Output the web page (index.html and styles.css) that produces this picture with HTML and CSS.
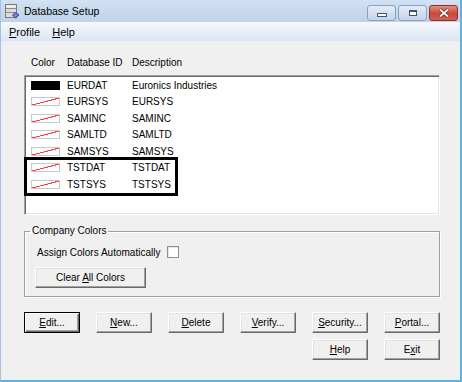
FILE: index.html
```html
<!DOCTYPE html>
<html lang="en">

<head>
    <meta charset="UTF-8">
    <title>Database Setup</title>
    <link rel="stylesheet" href="styles.css">
</head>

<body>

    <div class="window">
        <div class="titlebar">
            <svg class="app-icon" width="16" height="16" viewBox="0 0 16 16">
                <rect x="1.5" y="1.5" width="11" height="13" fill="#dcdcdc" stroke="#7b7b7b"/>
                <rect x="2.5" y="2.5" width="9" height="2" fill="#f4f4f4"/>
                <line x1="2" y1="5.5" x2="12" y2="5.5" stroke="#8d8d8d"/>
                <line x1="2" y1="9.5" x2="12" y2="9.5" stroke="#8d8d8d"/>
                <path d="M8.5 12 L11.5 9.5 L15 12 L11.5 15 Z" fill="#7f7fd6" stroke="#40409a"/>
            </svg>
            <span class="title">Database Setup</span>
            <div class="controls">
                <span class="ctl"><span class="glyph-min"></span></span>
                <span class="ctl"><span class="glyph-max"></span></span>
                <span class="ctl ctl-close">
                    <svg width="12" height="10" viewBox="0 0 12 10">
                        <path d="M2 1.5 L10 8.5 M10 1.5 L2 8.5" stroke="#5a1a12" stroke-width="3.2"/>
                        <path d="M2 1.5 L10 8.5 M10 1.5 L2 8.5" stroke="#fff" stroke-width="1.8"/>
                    </svg>
                </span>
            </div>
        </div>

        <div class="menubar">
            <span><u>P</u>rofile</span>
            <span><u>H</u>elp</span>
        </div>

        <div class="client">
            <div class="cols header">
                <span>Color</span>
                <span>Database ID</span>
                <span>Description</span>
            </div>

            <div class="list">
                <div class="cols row">
                    <span class="swatch swatch-black"></span>
                    <span>EURDAT</span>
                    <span>Euronics Industries</span>
                </div>
                <div class="cols row">
                    <span class="swatch"></span>
                    <span>EURSYS</span>
                    <span>EURSYS</span>
                </div>
                <div class="cols row">
                    <span class="swatch"></span>
                    <span>SAMINC</span>
                    <span>SAMINC</span>
                </div>
                <div class="cols row">
                    <span class="swatch"></span>
                    <span>SAMLTD</span>
                    <span>SAMLTD</span>
                </div>
                <div class="cols row">
                    <span class="swatch"></span>
                    <span>SAMSYS</span>
                    <span>SAMSYS</span>
                </div>
                <div class="cols row">
                    <span class="swatch"></span>
                    <span>TSTDAT</span>
                    <span>TSTDAT</span>
                </div>
                <div class="cols row">
                    <span class="swatch"></span>
                    <span>TSTSYS</span>
                    <span>TSTSYS</span>
                </div>
                <div class="selection"></div>
            </div>

            <fieldset class="group">
                <legend>Company Colors</legend>
                <label class="check-row">Assign Colors Automatically <input type="checkbox" class="check"></label>
                <button type="button" class="btn btn-wide">Clear <u>A</u>ll Colors</button>
            </fieldset>

            <div class="button-row">
                <button type="button" class="btn btn-default"><u>E</u>dit...</button>
                <button type="button" class="btn"><u>N</u>ew...</button>
                <button type="button" class="btn"><u>D</u>elete</button>
                <button type="button" class="btn"><u>V</u>erify...</button>
                <button type="button" class="btn"><u>S</u>ecurity...</button>
                <button type="button" class="btn"><u>P</u>ortal...</button>
            </div>
            <div class="button-row button-row-right">
                <button type="button" class="btn"><u>H</u>elp</button>
                <button type="button" class="btn">E<u>x</u>it</button>
            </div>
        </div>
    </div>

</body>

</html>
```

FILE: styles.css
```css
body {
    margin: 0;
    font-family: 'Liberation Sans', Arial, sans-serif;
    font-size: 10px;
    color: #000;
}

.window {
    width: 462px;
    height: 382px;
    box-sizing: border-box;
    background-color: #f0f0f0;
    border-left: 1px solid #a8c0db;
    border-right: 2px solid #57b5e8;
    border-bottom: 2px solid #57b5e8;
    overflow: hidden;
}

.titlebar {
    height: 22px;
    display: flex;
    align-items: center;
    padding-left: 3px;
    background: linear-gradient(#d2e1f3, #bed2ea);
}

.app-icon {
    margin-right: 4px;
}

.title {
    font-size: 10.5px;
    color: #000;
}

.controls {
    margin-left: auto;
    align-self: flex-start;
    margin-top: 5px;
    padding-right: 2px;
    display: flex;
    gap: 2px;
}

.ctl {
    width: 27px;
    height: 14px;
    border: 1px solid #8aa1bf;
    border-radius: 3px;
    background: linear-gradient(#e4ecf7, #c3d4ea);
    display: flex;
    align-items: center;
    justify-content: center;
}

.glyph-min {
    width: 8px;
    height: 2px;
    margin-top: 4px;
    background-color: #fff;
    border: 1px solid #42536b;
}

.glyph-max {
    width: 6px;
    height: 4px;
    background-color: #fff;
    border: 1px solid #42536b;
    box-shadow: inset 0 1px #42536b;
}

.ctl-close {
    border-color: #8e3128;
    background: linear-gradient(#e2907f, #c8483a 55%, #d4604f);
}

.menubar {
    height: 19px;
    display: flex;
    align-items: center;
    gap: 12px;
    padding-left: 8px;
    font-size: 11px;
    background: linear-gradient(#f5f8fc, #dbe5f3);
    border-bottom: 1px solid #e9eef6;
}

.client {
    padding: 14px 20px 0 23px;
}

.cols {
    display: grid;
    grid-template-columns: 36px 65px 1fr;
    align-items: center;
}

.header {
    height: 12px;
    padding-left: 7px;
    margin-bottom: 7px;
}

.list {
    position: relative;
    height: 140px;
    box-sizing: border-box;
    background-color: #fff;
    border: 1px solid;
    border-color: #a0a0a0 #fff #fff #a0a0a0;
    box-shadow: inset 1px 1px #696969, inset -1px -1px #e3e3e3;
    padding: 1px 0 0 6px;
}

.row {
    height: 16.5px;
}

/* red stroke runs from bottom-left to top-right */
.swatch {
    width: 29px;
    height: 9px;
    box-sizing: border-box;
    border: 1px solid #c8c8c8;
    background: linear-gradient(to bottom right, transparent 46%, #ff4040 47%, #ff4040 54%, transparent 55%);
}

.swatch-black {
    background: #000;
    border-color: #000;
}

.selection {
    position: absolute;
    left: -1px;
    top: 81px;
    width: 154px;
    height: 39px;
    box-sizing: border-box;
    border: 3px solid #000;
}

.group {
    margin: 10px 0 0;
    padding: 0 0 8px 12px;
    border: 1px solid #a0a0a0;
    box-shadow: inset 1px 1px #fff, 1px 1px #fff;
}

.group legend {
    margin-left: -7px;
    padding: 0 2px;
    line-height: 12px;
}

.check-row {
    display: flex;
    align-items: center;
    height: 14px;
    margin-top: 8px;
}

.check {
    appearance: none;
    width: 12px;
    height: 12px;
    margin: 0 0 0 7px;
    background-color: #fff;
    border: 1px solid #8f8f8f;
    box-shadow: inset 1px 1px #e6e6e6;
}

.btn {
    font-family: 'Liberation Sans', Arial, sans-serif;
    font-size: 10px;
    color: #000;
    width: 56px;
    height: 21px;
    padding: 0;
    background-color: #f0f0f0;
    border: 1px solid;
    border-color: #fff #696969 #696969 #fff;
    box-shadow: inset -1px -1px #a0a0a0, inset 1px 1px #e3e3e3;
}

.btn-default {
    border-color: #000;
    box-shadow: inset 1px 1px #fff, inset -1px -1px #696969, inset -2px -2px #a0a0a0;
}

.btn-wide {
    width: 111px;
    margin: 8px 0 0 -2px;
}

.button-row {
    display: flex;
    gap: 16px;
    margin-top: 15px;
}

.button-row-right {
    justify-content: flex-end;
    margin-top: 6px;
}
```
